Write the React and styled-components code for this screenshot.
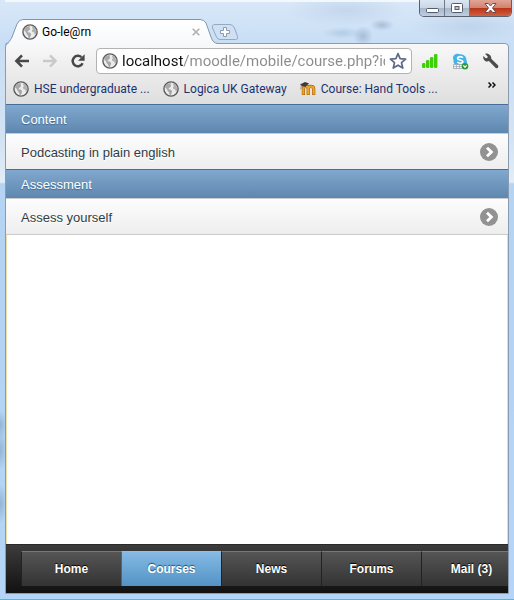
import React, { useState } from "react";
import styled, { createGlobalStyle } from "styled-components";

const bookmarks = [
  { id: 1, label: "HSE undergraduate ...", icon: "globe" },
  { id: 2, label: "Logica UK Gateway", icon: "globe" },
  { id: 3, label: "Course: Hand Tools ...", icon: "moodle" },
];

const sections = [
  { title: "Content", items: ["Podcasting in plain english"] },
  { title: "Assessment", items: ["Assess yourself"] },
];

const navItems = ["Home", "Courses", "News", "Forums", "Mail (3)"];

const GlobeIcon = ({ size = 16 }) => (
  <svg width={size} height={size} viewBox="0 0 16 16" aria-hidden="true">
    <circle cx="8" cy="8" r="7.1" fill="#ececec" stroke="#5b5b5b" strokeWidth="1.4" />
    <path
      d="M2 6.2 3.4 3.6 6 2.3 8.4 2.2 7.4 3.5 8.2 4.6 7.3 6.2 5.9 7 5.6 8.2 7.6 8.5 9.2 10 8.7 12 7.7 14.2 6.5 13.8 6 11.4 4.6 10 4 8.2z"
      fill="#a9a9a9"
    />
    <path d="M10.4 2.2 12.6 3.8 13.9 6.2 14.1 9.4 12.7 10.8 12.2 8.6 10.4 7.9 9.9 6.2 11.1 5 10 3.9z" fill="#b0b0b0" />
  </svg>
);

const MoodleIcon = () => (
  <svg width="16" height="16" viewBox="0 0 16 16" aria-hidden="true">
    <path
      d="M3.4 14V7.8c0-1.6 1-2.4 2.3-2.4s2.5.8 2.5 2.4V14m0-6.2c0-1.6 1-2.4 2.5-2.4s3 .8 3 2.6V14"
      fill="none"
      stroke="#a86808"
      strokeWidth="3.2"
    />
    <path
      d="M3.4 13.6V7.8c0-1.6 1-2.4 2.3-2.4s2.5.8 2.5 2.4v5.8m0-5.8c0-1.6 1-2.4 2.5-2.4s3 .8 3 2.6v5.6"
      fill="none"
      stroke="#f2a32a"
      strokeWidth="2"
    />
    <path d="M0 3.6 5 1l4.2 1.4L6 5 5.6 6 1.8 5z" fill="#3c3c3c" />
    <path d="M1.4 4.2.8 8.4" stroke="#777" strokeWidth=".8" />
  </svg>
);

const BackIcon = () => (
  <svg width="16" height="14" viewBox="0 0 16 14" fill="none" stroke="currentColor" strokeWidth="2.6" aria-hidden="true">
    <path d="M2.4 7H15M8 1.4 2.4 7 8 12.6" />
  </svg>
);

const ForwardIcon = () => (
  <svg width="16" height="14" viewBox="0 0 16 14" fill="none" stroke="currentColor" strokeWidth="2.4" aria-hidden="true">
    <path d="M1 7h12.6M8 1.4 13.6 7 8 12.6" />
  </svg>
);

const ReloadIcon = () => (
  <svg width="16" height="16" viewBox="0 0 16 16" aria-hidden="true">
    <path d="M12.6 10.2A5.2 5.2 0 1 1 11.4 4.2" fill="none" stroke="currentColor" strokeWidth="2.5" />
    <path d="M14.6 1.2v6.6H8z" fill="currentColor" />
  </svg>
);

const StarIcon = () => (
  <svg width="18" height="18" viewBox="0 0 18 18" aria-hidden="true">
    <path
      d="M9 1.6 11.1 6.6 16.6 7.1 12.5 10.7 13.8 16.1 9 13.2 4.2 16.1 5.5 10.7 1.4 7.1 6.9 6.6z"
      fill="#fff"
      stroke="#5f6a86"
      strokeWidth="1.7"
      strokeLinejoin="round"
    />
  </svg>
);

const SignalIcon = () => (
  <svg width="16" height="16" viewBox="0 0 16 16" fill="#3fcf08" aria-hidden="true">
    <rect x="0" y="10" width="3.4" height="5" rx="1.2" />
    <rect x="4" y="7" width="3.4" height="8" rx="1.2" />
    <rect x="8" y="4" width="3.4" height="11" rx="1.2" />
    <rect x="12" y="1" width="3.4" height="14" rx="1.2" />
  </svg>
);

const SkypeIcon = () => (
  <svg width="17" height="17" viewBox="0 0 17 17" aria-hidden="true">
    <path
      d="M4.6.8C6 .4 7 .8 8 1.2c4 0 6.6 2.6 6.4 6 .8 1.3.9 2.8.2 4L10 12H3.6C1.6 10.8 1.2 8.6 1.6 7 .2 4.6 1.4 1.6 4.6.8z"
      fill="#42b4ea"
    />
    <path
      d="M10.8 4.9C9.9 3.3 5.5 3.2 5.6 5.4c0 2 5.2 1.1 5.2 3.3 0 2-4.3 2-5.4.2"
      fill="none"
      stroke="#fff"
      strokeWidth="1.7"
    />
    <path d="M1.5 11.5h9v4h-9z" fill="#f5f5f5" stroke="#9aa4ad" strokeWidth=".8" />
    <path d="M4.5 11.5v4m3-4v4m-6-2h9" stroke="#9aa4ad" strokeWidth=".7" />
    <circle cx="13" cy="13.2" r="3.3" fill="#2c9b35" />
    <path d="m11.4 12.4 1.6 1.9 1.6-1.9" fill="none" stroke="#fff" strokeWidth="1.2" />
  </svg>
);

const WrenchIcon = () => (
  <svg width="16" height="16" viewBox="0 0 16 16" aria-hidden="true">
    <path
      d="M4.8.7C3.8.4 2.8.5 2.2.9l2.5 2.5-.4 1.5-1.6.4L.4 3C-.2 5 .6 7 2.2 7.900c1.200.7 2.600.7 3.700.2l6.300 6.500c.7.8 1.900.8 2.600.1.7-.8.7-1.900-.1-2.600L8.2 5.800c.5-2-.9-4.500-3.400-5.100z"
      fill="#4c4c4c"
    />
  </svg>
);

const ArrowIcon = () => (
  <svg width="18" height="18" viewBox="0 0 18 18" aria-hidden="true">
    <circle cx="9" cy="9" r="9" fill="#929292" />
    <path d="m7 4.8 4.4 4.2L7 13.2" fill="none" stroke="#fff" strokeWidth="2.8" />
  </svg>
);

const TabShape = () => (
  <svg width="214" height="26" viewBox="0 0 214 26" aria-hidden="true">
    <defs>
      <linearGradient id="tabFill" x1="0" y1="0" x2="0" y2="1">
        <stop offset="0" stopColor="#ffffff" />
        <stop offset="1" stopColor="#f7f8f9" />
      </linearGradient>
    </defs>
    <path
      d="M0 26.5C4 25.5 5 22 7 18L12 5Q14 .5 18 .5H195Q199 .5 201 4L206 18Q208 24.5 213 24.5V26.5z"
      fill="url(#tabFill)"
    />
    <path
      d="M0 25.5C4 23.5 5 22 7 18L12 5Q14 .5 18 .5H195Q199 .5 201 4L206 18Q208 24.5 213 24.5"
      fill="none"
      stroke="#8197b1"
    />
  </svg>
);

const NewTabIcon = () => (
  <svg width="28" height="17" viewBox="0 0 28 17" aria-hidden="true">
    <path
      d="M4 .5H19Q22 .5 23.5 4L26.5 12.5Q27.5 15.5 24.5 15.5H9Q6.5 15.5 5.5 13L1.5 4Q.5 .5 4 .5z"
      fill="#cfe0f3"
      stroke="#93a9c4"
    />
    <path d="M12.5 3.5h3v3h3v3h-3v3h-3v-3h-3v-3h3z" fill="#fff" stroke="#8a9bb2" />
  </svg>
);

const App = () => {
  const [active, setActive] = useState("Courses");
  const [url, setUrl] = useState("localhost/moodle/mobile/course.php?id");

  return (
    <>
      <GlobalStyle />
      <Desktop>
        <TitleBar>
          <Tab>
            <TabShape />
            <TabContent>
              <GlobeIcon />
              <TabTitle>Go-le@rn</TabTitle>
              <PlainButton aria-label="Close tab">
                <svg width="8" height="8" viewBox="0 0 8 8" stroke="#b0b0b0" strokeWidth="1.6">
                  <path d="m.7.7 6.6 6.6m0-6.6L.7 7.3" />
                </svg>
              </PlainButton>
            </TabContent>
          </Tab>
          <NewTab aria-label="New tab">
            <NewTabIcon />
          </NewTab>
          <WindowControls>
            <WindowButton aria-label="Minimize">
              <svg width="13" height="12" viewBox="0 0 13 12">
                <rect x=".5" y="6.5" width="12" height="4" rx="1" fill="#fff" stroke="#555b6b" />
              </svg>
            </WindowButton>
            <WindowButton aria-label="Maximize">
              <svg width="12" height="12" viewBox="0 0 12 12" fill="#fff" stroke="#555b6b">
                <rect x=".5" y="1.5" width="11" height="9" rx="1" />
                <rect x="4" y="4.5" width="4" height="3" fill="#b8c6d8" />
              </svg>
            </WindowButton>
            <WindowButton $close aria-label="Close">
              <svg width="13" height="12" viewBox="0 0 13 12">
                <path
                  d="M1 1.5h3.3L6.5 4 8.7 1.5H12L8.5 6l3.5 4.5H8.7L6.5 8l-2.2 2.5H1L4.5 6z"
                  fill="#fff"
                  stroke="#6b4a52"
                />
              </svg>
            </WindowButton>
          </WindowControls>
        </TitleBar>

        <Browser>
          <Toolbar>
            <ToolButton aria-label="Back">
              <BackIcon />
            </ToolButton>
            <ToolButton $muted aria-label="Forward">
              <ForwardIcon />
            </ToolButton>
            <ToolButton aria-label="Reload">
              <ReloadIcon />
            </ToolButton>
            <AddressBar>
              <GlobeIcon />
              <AddressInput
                type="text"
                aria-label="Address"
                value={url}
                onChange={(e) => setUrl(e.target.value)}
              />
              <PlainButton aria-label="Bookmark this page">
                <StarIcon />
              </PlainButton>
            </AddressBar>
            <Extensions>
              <PlainButton aria-label="Signal">
                <SignalIcon />
              </PlainButton>
              <PlainButton aria-label="Skype">
                <SkypeIcon />
              </PlainButton>
              <PlainButton aria-label="Settings">
                <WrenchIcon />
              </PlainButton>
            </Extensions>
          </Toolbar>

          <BookmarkBar>
            {bookmarks.map((item) => (
              <Bookmark key={item.id} href="#">
                {item.icon === "globe" ? <GlobeIcon /> : <MoodleIcon />}
                {item.label}
              </Bookmark>
            ))}
            <MoreButton aria-label="More bookmarks">
              <svg width="8" height="6" viewBox="0 0 8 6" fill="none" stroke="#111" strokeWidth="1.5">
                <path d="m.5.5 2.5 2.5L.5 5.5m4-5L7 3 4.5 5.5" />
              </svg>
            </MoreButton>
          </BookmarkBar>

          <Page>
            {sections.map((section) => (
              <section key={section.title}>
                <Divider>{section.title}</Divider>
                {section.items.map((item) => (
                  <ListItem key={item} href="#">
                    {item}
                    <ArrowIcon />
                  </ListItem>
                ))}
              </section>
            ))}
            <EmptyArea />
          </Page>

          <NavBar>
            {navItems.map((item) => (
              <NavButton key={item} $active={active === item} onClick={() => setActive(item)}>
                {item}
              </NavButton>
            ))}
          </NavBar>
        </Browser>
      </Desktop>
    </>
  );
};

export default App;

// Styled Components
const GlobalStyle = createGlobalStyle`
  * {
    box-sizing: border-box;
  }

  body {
    margin: 0;
    font-family: "Liberation Sans", Arial, sans-serif;
  }

  button {
    font: inherit;
    cursor: pointer;
  }

  svg {
    display: block;
    flex: none;
  }
`;

const Desktop = styled.div`
  min-height: 100vh;
  display: flex;
  flex-direction: column;
  padding: 0 5px 5px;
  border-bottom: 1px solid #45bfe0;
  background:
    radial-gradient(ellipse 12px 6px at 382px 25px, #8ea6c299, transparent),
    radial-gradient(ellipse 10px 10px at 363px 36px, #8ea6c299, transparent),
    radial-gradient(ellipse 20px 6px at 342px 33px, #9cbcd688, transparent),
    radial-gradient(ellipse 60px 16px at 346px 10px, #a9c0da66, transparent),
    radial-gradient(ellipse 60px 16px at 470px 26px, #a9c0da66, transparent),
    radial-gradient(ellipse 8px 14px at 0 425px, #6f8fb077, transparent),
    radial-gradient(ellipse 8px 20px at 0 450px, #6f8fb077, transparent),
    radial-gradient(ellipse 8px 20px at 0 504px, #6f8fb077, transparent),
    linear-gradient(#d9e8f8 0, #c8def5 44px, #d3e3f3 140px, #e2edf7 182px, #b5d3f3 184px, #b4d5f7 100%);
`;

const TitleBar = styled.header`
  display: flex;
  align-items: flex-start;
  height: 43px;
  border-top: 2px solid #f3f8fd;
`;

const Tab = styled.div`
  position: relative;
  z-index: 1;
  width: 206px;
  margin-top: 17px;
`;

const TabContent = styled.div`
  position: absolute;
  inset: 0;
  display: flex;
  align-items: center;
  gap: 4px;
  padding: 0 11px 0 17px;
`;

const TabTitle = styled.span`
  flex: 1;
  font: 12px/16px Roboto, sans-serif;
  color: #000;
`;

const PlainButton = styled.button`
  display: flex;
  padding: 0;
  border: 0;
  background: none;
`;

const NewTab = styled(PlainButton)`
  margin-top: 22px;
`;

const WindowControls = styled.div`
  display: flex;
  margin: -2px -3px 0 auto;
  border: 1px solid #59606e;
  border-top: 0;
  border-radius: 0 0 5px 5px;
  overflow: hidden;
`;

const WindowButton = styled.button`
  display: flex;
  align-items: center;
  justify-content: center;
  width: ${({ $close }) => ($close ? "41px" : "25px")};
  height: 16px;
  padding: 0;
  border: 0;
  border-right: ${({ $close }) => ($close ? "0" : "1px solid #707a8b")};
  background: ${({ $close }) =>
    $close
      ? "linear-gradient(#e0a596, #d28270 48%, #b93418 52%, #d2603f)"
      : "linear-gradient(#dbe6f2, #c9d6e5 48%, #a7b8cc 52%, #bfcfe0)"};
`;

const Browser = styled.div`
  flex: 1;
  display: flex;
  flex-direction: column;
  min-width: 0;
  border: 1px solid #8a9bb1;
  border-radius: 4px 4px 0 0;
  overflow: hidden;
  background: linear-gradient(#f8f8f8, #dedede 60px);
`;

const Toolbar = styled.div`
  display: flex;
  align-items: center;
  height: 34px;
  padding: 0 9px 0 8px;
`;

const ToolButton = styled(PlainButton)`
  width: 28px;
  color: ${({ $muted }) => ($muted ? "#c9c9c9" : "#484848")};
`;

const AddressBar = styled.div`
  flex: 1;
  display: flex;
  align-items: center;
  gap: 4px;
  min-width: 0;
  height: 26px;
  margin-left: -2px;
  padding: 0 4px 0 5px;
  border: 1px solid #b3b3b3;
  border-radius: 4px;
  background: #fff;
`;

const AddressInput = styled.input`
  flex: 1;
  min-width: 0;
  height: 24px;
  padding: 0;
  border: 0;
  outline: 0;
  font: 15px/24px Roboto, sans-serif;
  color: transparent;
  caret-color: #000;
  /* host name dark, path grey */
  background: linear-gradient(90deg, #111 61px, #8b8b8b 61px);
  background-clip: text;
`;

const Extensions = styled.div`
  display: flex;
  align-items: center;
  gap: 14px;
  margin-left: 10px;
`;

const BookmarkBar = styled.nav`
  display: flex;
  align-items: center;
  gap: 13px;
  height: 26px;
  padding: 0 12px 4px 7px;
`;

const Bookmark = styled.a`
  display: flex;
  align-items: center;
  gap: 5px;
  font: 12px/16px Roboto, sans-serif;
  color: #1d3270;
  text-decoration: none;
  white-space: nowrap;
`;

const MoreButton = styled(PlainButton)`
  margin: 0 0 8px auto;
`;

const Page = styled.main`
  flex: 1;
  display: flex;
  flex-direction: column;
  background: #fff;
`;

const EmptyArea = styled.div`
  flex: 1;
  border: solid #efdca8;
  border-width: 0 1px;
`;

const Divider = styled.h2`
  margin: 0;
  padding: 5px 15px 4px;
  border-top: 1px solid #456f9a;
  background: linear-gradient(#81a8ce, #5e87b0);
  font-size: 13px;
  font-weight: 400;
  line-height: 19px;
  color: #fff;
  text-shadow: 0 1px 1px #3e6790;
`;

const ListItem = styled.a`
  display: flex;
  align-items: center;
  justify-content: space-between;
  height: 36px;
  padding: 1px 10px 0 15px;
  border-top: 1px solid #ccc;
  background: linear-gradient(#fdfdfd, #eeeeee);
  font-size: 13px;
  color: #2f3e46;
  text-decoration: none;
  text-shadow: 0 1px 0 #fff;

  section:nth-last-child(2) > &:last-child {
    height: 37px;
    border-bottom: 1px solid #ccc;
  }
`;

const NavBar = styled.nav`
  display: flex;
  padding: 6px 0 7px 15px;
  border-top: 1px solid #2a2a2a;
  background: linear-gradient(#3c3c3c, #111);
  overflow: hidden;
`;

const NavButton = styled.button`
  flex: none;
  width: 100px;
  height: 35px;
  padding: 0;
  border: 0;
  border-top: 1px solid ${({ $active }) => ($active ? "#8fc0e6" : "#777")};
  border-left: 1px solid ${({ $active }) => ($active ? "#2373a5" : "#222")};
  background: ${({ $active }) =>
    $active ? "linear-gradient(#85bae4, #5393c5)" : "linear-gradient(#555, #333)"};
  font-size: 12px;
  font-weight: 700;
  color: #fff;
  text-shadow: 0 -1px 1px ${({ $active }) => ($active ? "#145072" : "#000")};
`;
